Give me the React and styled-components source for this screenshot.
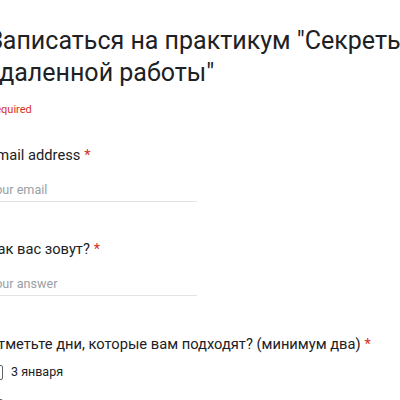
import React from "react";
import styled, { createGlobalStyle } from "styled-components";

const Global = createGlobalStyle`
  html, body { margin: 0; padding: 0; background: #ffffff; overflow: hidden; }
  body { font-family: Roboto, "Noto Sans", Arial, sans-serif; color: #202124; }
`;

const Page = styled.div`
  width: 400px;
  height: 400px;
  overflow: hidden;
  background: #fff;
`;

const Form = styled.div`
  margin-left: -12px;
  padding-top: 25px;
  width: 460px;
  display: flex;
  flex-direction: column;
`;

const Title = styled.h1`
  margin: 0;
  font-family: Roboto, sans-serif;
  font-weight: 400;
  font-size: 25px;
  line-height: 32px;
  color: #202124;
`;

const Required = styled.div`
  margin-top: 14px;
  margin-left: -7px;
  font-size: 11px;
  line-height: 14px;
  color: #d93025;
`;

const Question = styled.div`
  display: flex;
  flex-direction: column;
  margin-top: ${(p) => p.$gap}px;
`;

const Label = styled.div`
  font-size: 14.7px;
  line-height: 20px;
  color: #202124;
`;

const Star = styled.span`
  color: #d93025;
  margin-left: 4px;
`;

const Input = styled.div`
  margin-top: 17px;
  width: 209px;
  font-size: 12.6px;
  line-height: 16px;
  color: #9aa0a6;
  padding-bottom: 3px;
  border-bottom: 1px solid #e3e3e3;
`;

const Option = styled.label`
  display: flex;
  align-items: center;
  gap: 8px;
  margin-top: ${(p) => p.$gap}px;
  font-size: 12.5px;
  line-height: 16px;
  color: #202124;
`;

const Box = styled.span`
  flex: none;
  width: 15px;
  height: 15px;
  border: 1.5px solid #5f6368;
  border-radius: 2px;
  box-sizing: border-box;
`;

export default function App() {
  return (
    <Page>
      <Global />
      <Form>
        <Title>Записаться на практикум "Секреты удаленной работы"</Title>
        <Required>* Required</Required>
        <Question $gap={28}>
          <Label>
            Email address<Star>*</Star>
          </Label>
          <Input>Your email</Input>
        </Question>
        <Question $gap={37}>
          <Label>
            Как вас зовут?<Star>*</Star>
          </Label>
          <Input>Your answer</Input>
        </Question>
        <Question $gap={38}>
          <Label>
            Отметьте дни, которые вам подходят? (минимум два)<Star>*</Star>
          </Label>
          <Option $gap={10}>
            <Box />3 января
          </Option>
          <Option $gap={18}>
            <Box />4 января
          </Option>
        </Question>
      </Form>
    </Page>
  );
}
